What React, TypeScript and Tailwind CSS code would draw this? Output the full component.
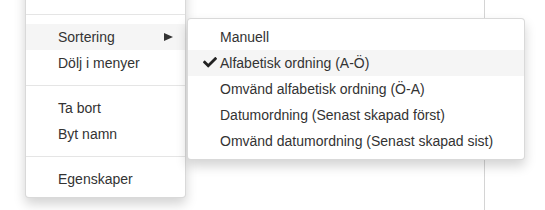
import React from 'react';

const font = { fontFamily: '"Liberation Sans", Arial, Helvetica, sans-serif' };

function Divider() {
  return <div className="my-[9px] h-px bg-[#e5e5e5]" />;
}

function Item({ label, active, children }: { label: string; active?: boolean; children?: React.ReactNode }) {
  return (
    <div className={`relative flex h-[26px] items-center pl-[32px] pr-[12px] text-[14px] leading-[20px] text-[#333] ${active ? 'bg-[#f5f5f5]' : ''}`}>
      {children}
      <span className="flex-1 whitespace-nowrap">{label}</span>
    </div>
  );
}

function Check() {
  return (
    <svg className="absolute left-[15px] top-[7px] h-[11px] w-[14px]" viewBox="0 0 512 400" fill="#222">
      <path d="M173.898 375.404l-166.4-166.4c-9.997-9.997-9.997-26.206 0-36.204l36.203-36.204c9.997-9.998 26.207-9.998 36.204 0L192 248.69 432.095 8.596c9.997-9.997 26.207-9.997 36.204 0l36.203 36.204c9.997 9.997 9.997 26.206 0 36.204l-294.4 294.401c-9.998 9.997-26.207 9.997-36.204-.001z" />
    </svg>
  );
}

const sortOptions = [
  'Manuell',
  'Alfabetisk ordning (A-Ö)',
  'Omvänd alfabetisk ordning (Ö-A)',
  'Datumordning (Senast skapad först)',
  'Omvänd datumordning (Senast skapad sist)',
];

export default function App() {
  return (
    <div className="relative h-[210px] w-[545px] overflow-hidden bg-white" style={font}>
      {/* background column divider */}
      <div className="absolute left-[484px] top-0 h-full w-px bg-[#d4d4d4]" />

      <div className="relative ml-[25px] mt-[-27px] w-[161px] rounded-[4px] border border-[rgba(0,0,0,0.15)] bg-white py-[5px] shadow-[0_6px_12px_rgba(0,0,0,0.175)]">
        {/* item scrolled out of view above */}
        <div className="h-[26px]" />
        <Divider />
        <div className="relative">
          <div className="flex h-[26px] items-center bg-[#f5f5f5] pl-[32px] pr-[12px] text-[14px] leading-[20px] text-[#333]">
            <span className="flex-1">Sortering</span>
            <svg className="h-[8px] w-[9px]" viewBox="0 0 9 8" fill="#333">
              <path d="M0 0L9 4L0 8Z" />
            </svg>
          </div>
          <div className="absolute left-[161px] top-[-6px] w-[338px] rounded-[4px] border border-[rgba(0,0,0,0.15)] bg-white py-[5px] shadow-[0_6px_12px_rgba(0,0,0,0.175)]">
            {sortOptions.map((opt, i) => (
              <Item key={opt} label={opt} active={i === 1}>
                {i === 1 && <Check />}
              </Item>
            ))}
          </div>
        </div>
        <Item label="Dölj i menyer" />
        <Divider />
        <Item label="Ta bort" />
        <Item label="Byt namn" />
        <Divider />
        <Item label="Egenskaper" />
      </div>
    </div>
  );
}
